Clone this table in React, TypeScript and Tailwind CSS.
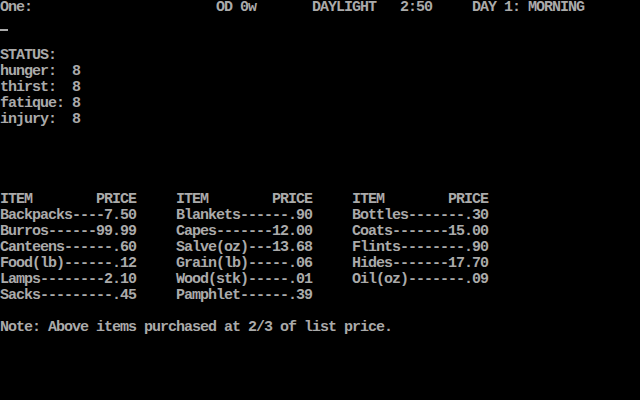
const COLS = 80;

function place(parts: Array<[number, string]>) {
  let line = "";
  for (const [col, text] of parts) {
    line = line.padEnd(col, " ") + text;
  }
  return line.padEnd(COLS, " ");
}

function priceCell(name: string, price: string) {
  // name + dashes + price fill a 17-character field
  return name + "-".repeat(17 - name.length - price.length) + price;
}

const col1: Array<[string, string]> = [
  ["Backpacks", "7.50"],
  ["Burros", "99.99"],
  ["Canteens", ".60"],
  ["Food(lb)", ".12"],
  ["Lamps", "2.10"],
  ["Sacks", ".45"],
];

const col2: Array<[string, string]> = [
  ["Blankets", ".90"],
  ["Capes", "12.00"],
  ["Salve(oz)", "13.68"],
  ["Grain(lb)", ".06"],
  ["Wood(stk)", ".01"],
  ["Pamphlet", ".39"],
];

const col3: Array<[string, string]> = [
  ["Bottles", ".30"],
  ["Coats", "15.00"],
  ["Flints", ".90"],
  ["Hides", "17.70"],
  ["Oil(oz)", ".09"],
];

function buildScreen() {
  const rows: string[] = Array(25).fill("");
  rows[0] = place([
    [0, "One:"],
    [27, "OD 0w"],
    [39, "DAYLIGHT"],
    [50, "2:50"],
    [59, "DAY 1: MORNING"],
  ]);
  rows[3] = "STATUS:";
  rows[4] = "hunger:  8";
  rows[5] = "thirst:  8";
  rows[6] = "fatique: 8";
  rows[7] = "injury:  8";
  rows[12] = place([
    [0, "ITEM"],
    [12, "PRICE"],
    [22, "ITEM"],
    [34, "PRICE"],
    [44, "ITEM"],
    [56, "PRICE"],
  ]);
  for (let i = 0; i < 6; i++) {
    const parts: Array<[number, string]> = [
      [0, priceCell(col1[i][0], col1[i][1])],
      [22, priceCell(col2[i][0], col2[i][1])],
    ];
    if (col3[i]) parts.push([44, priceCell(col3[i][0], col3[i][1])]);
    rows[13 + i] = place(parts);
  }
  rows[20] = "Note: Above items purchased at 2/3 of list price.";
  return rows;
}

export default function App() {
  const rows = buildScreen();
  return (
    <div className="w-[640px] h-[400px] bg-black overflow-hidden">
      <div
        className="text-[#aaaaaa] text-[15px] font-bold tracking-[-1px] leading-4 whitespace-pre"
        style={{ fontFamily: '"Liberation Mono", "DejaVu Sans Mono", monospace' }}
      >
        {rows.map((r, i) =>
          i === 1 ? (
            <div key={i} className="h-4 flex items-end pb-[1px]">
              <div className="w-2 h-[2px] bg-[#aaaaaa]" />
            </div>
          ) : (
            <div key={i} className="h-4">
              {r}
            </div>
          )
        )}
      </div>
    </div>
  );
}
